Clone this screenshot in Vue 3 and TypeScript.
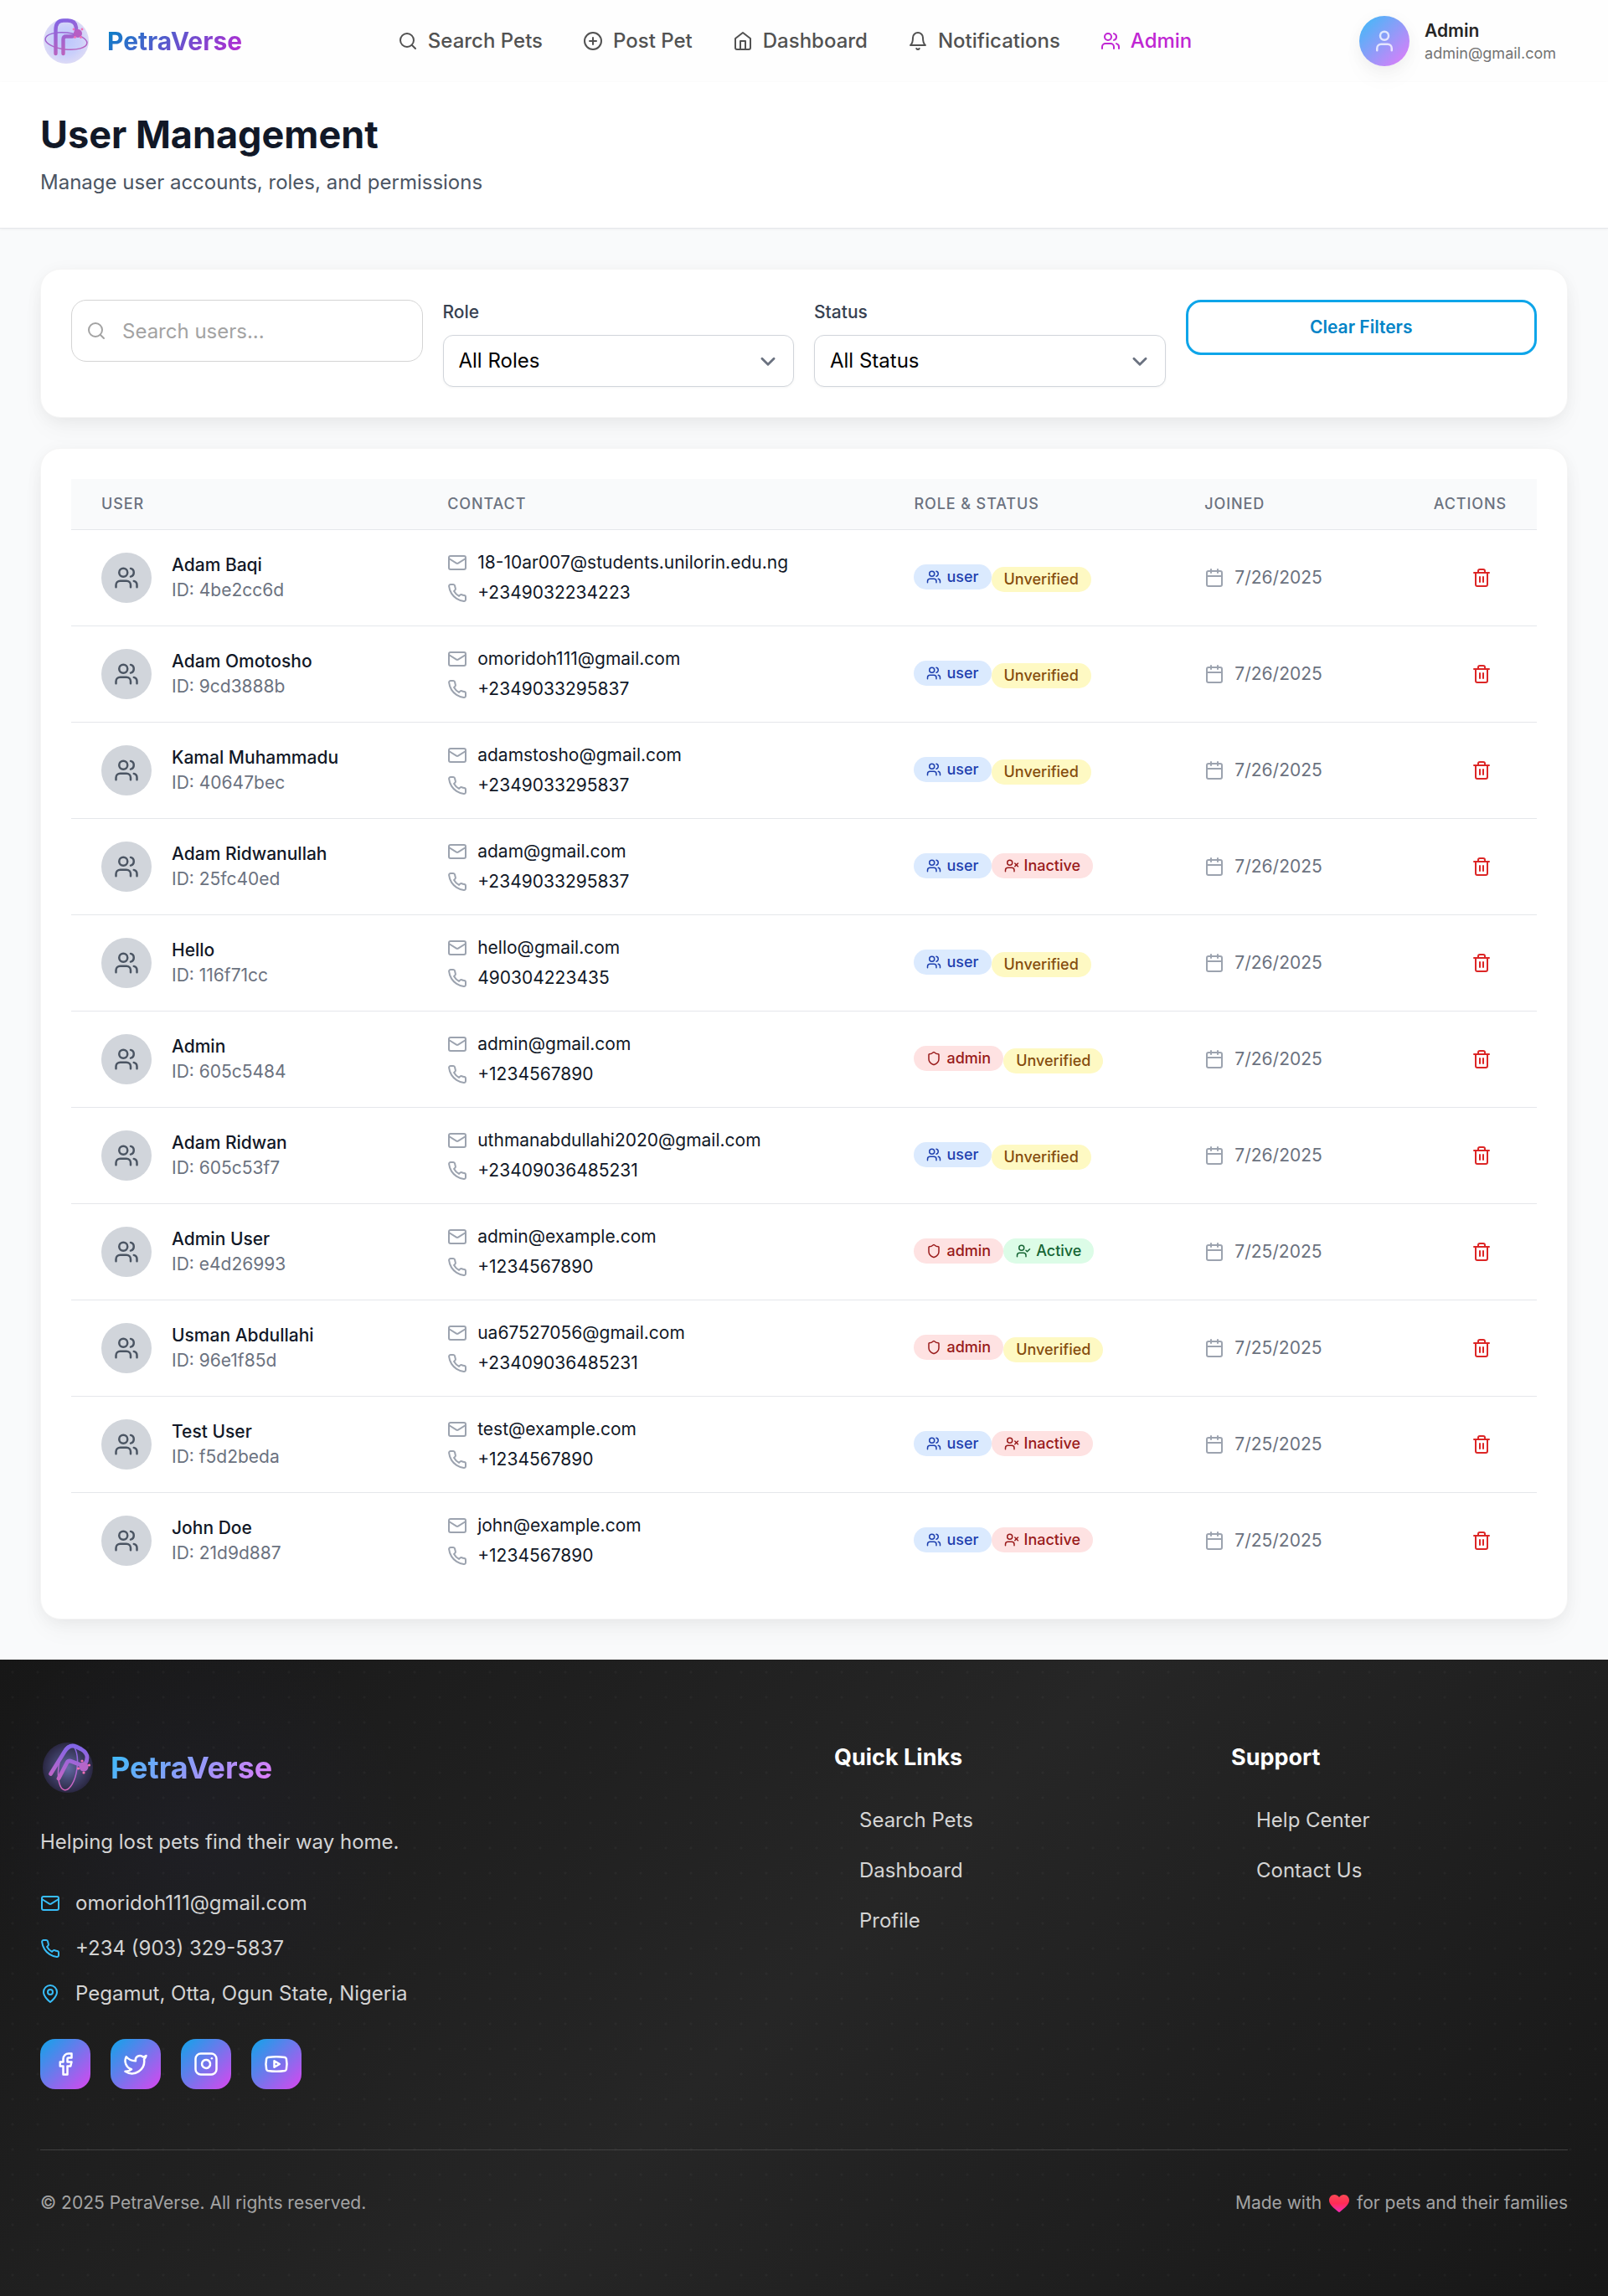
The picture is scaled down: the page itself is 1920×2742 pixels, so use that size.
<script setup lang="ts">
import { computed, h, ref } from 'vue'

const shapes: Record<string, string[]> = {
  search: ['M19 11a8 8 0 1 1-16 0 8 8 0 0 1 16 0', 'm21 21-4.3-4.3'],
  plus: ['M22 12a10 10 0 1 1-20 0 10 10 0 0 1 20 0', 'M8 12h8', 'M12 8v8'],
  home: ['m3 9 9-7 9 7v11a2 2 0 0 1-2 2H5a2 2 0 0 1-2-2z', 'M9 22V12h6v10'],
  bell: ['M6 8a6 6 0 0 1 12 0c0 7 3 9 3 9H3s3-2 3-9', 'M10.3 21a1.94 1.94 0 0 0 3.4 0'],
  users: [
    'M16 21v-2a4 4 0 0 0-4-4H6a4 4 0 0 0-4 4v2',
    'M13 7a4 4 0 1 1-8 0 4 4 0 0 1 8 0',
    'M22 21v-2a4 4 0 0 0-3-3.87',
    'M16 3.13a4 4 0 0 1 0 7.75',
  ],
  user: ['M19 21v-2a4 4 0 0 0-4-4H9a4 4 0 0 0-4 4v2', 'M16 7a4 4 0 1 1-8 0 4 4 0 0 1 8 0'],
  userX: [
    'M16 21v-2a4 4 0 0 0-4-4H6a4 4 0 0 0-4 4v2',
    'M13 7a4 4 0 1 1-8 0 4 4 0 0 1 8 0',
    'm17 8 5 5',
    'm22 8-5 5',
  ],
  userCheck: [
    'M16 21v-2a4 4 0 0 0-4-4H6a4 4 0 0 0-4 4v2',
    'M13 7a4 4 0 1 1-8 0 4 4 0 0 1 8 0',
    'm16 11 2 2 4-4',
  ],
  shield: [
    'M20 13c0 5-3.5 7.5-7.66 8.95a1 1 0 0 1-.67-.01C7.5 20.5 4 18 4 13V6a1 1 0 0 1 1-1c2 0 4.5-1.2 6.24-2.72a1.17 1.17 0 0 1 1.52 0C14.51 3.81 17 5 19 5a1 1 0 0 1 1 1z',
  ],
  mail: [
    'M4 4h16a2 2 0 0 1 2 2v12a2 2 0 0 1-2 2H4a2 2 0 0 1-2-2V6a2 2 0 0 1 2-2z',
    'm22 7-8.97 5.7a1.94 1.94 0 0 1-2.06 0L2 7',
  ],
  phone: [
    'M22 16.92v3a2 2 0 0 1-2.18 2 19.79 19.79 0 0 1-8.63-3.07 19.5 19.5 0 0 1-6-6 19.79 19.79 0 0 1-3.07-8.67A2 2 0 0 1 4.11 2h3a2 2 0 0 1 2 1.72 12.84 12.84 0 0 0 .7 2.81 2 2 0 0 1-.45 2.11L8.09 9.91a16 16 0 0 0 6 6l1.27-1.27a2 2 0 0 1 2.11-.45 12.84 12.84 0 0 0 2.81.7A2 2 0 0 1 22 16.92z',
  ],
  pin: ['M20 10c0 6-8 12-8 12s-8-6-8-12a8 8 0 0 1 16 0z', 'M15 10a3 3 0 1 1-6 0 3 3 0 0 1 6 0'],
  calendar: ['M8 2v4', 'M16 2v4', 'M5 4h14a2 2 0 0 1 2 2v14a2 2 0 0 1-2 2H5a2 2 0 0 1-2-2V6a2 2 0 0 1 2-2z', 'M3 10h18'],
  trash: [
    'M3 6h18',
    'M19 6v14c0 1-1 2-2 2H7c-1 0-2-1-2-2V6',
    'M8 6V4c0-1 1-2 2-2h4c1 0 2 1 2 2v2',
    'M10 11v6',
    'M14 11v6',
  ],
  chevron: ['m7 10 5 5 5-5'],
  facebook: ['M18 2h-3a5 5 0 0 0-5 5v3H7v4h3v8h4v-8h3l1-4h-4V7a1 1 0 0 1 1-1h3z'],
  twitter: [
    'M22 4s-.7 2.1-2 3.4c1.6 10-9.4 17.3-18 11.6 2.2.1 4.4-.6 6-2C3 15.5.5 9.6 3 5c2.2 2.6 5.6 4.1 9 4-.9-4.2 4-6.6 7-3.8 1.1 0 3-1.2 3-1.2z',
  ],
  instagram: [
    'M7 2h10a5 5 0 0 1 5 5v10a5 5 0 0 1-5 5H7a5 5 0 0 1-5-5V7a5 5 0 0 1 5-5z',
    'M16 11.37A4 4 0 1 1 12.63 8 4 4 0 0 1 16 11.37z',
    'M17.5 6.5h.01',
  ],
  youtube: [
    'M2.5 17a24.12 24.12 0 0 1 0-10 2 2 0 0 1 1.4-1.4 49.56 49.56 0 0 1 16.2 0A2 2 0 0 1 21.5 7a24.12 24.12 0 0 1 0 10 2 2 0 0 1-1.4 1.4 49.55 49.55 0 0 1-16.2 0A2 2 0 0 1 2.5 17',
    'm10 15 5-3-5-3z',
  ],
}

const Icon = (props: { name: string }) =>
  h(
    'svg',
    {
      viewBox: '0 0 24 24',
      fill: 'none',
      stroke: 'currentColor',
      'stroke-width': 2,
      'stroke-linecap': 'round',
      'stroke-linejoin': 'round',
      'aria-hidden': 'true',
    },
    shapes[props.name].map((d) => h('path', { d })),
  )
Icon.props = ['name']

const navItems = [
  { icon: 'search', label: 'Search Pets', active: false },
  { icon: 'plus', label: 'Post Pet', active: false },
  { icon: 'home', label: 'Dashboard', active: false },
  { icon: 'bell', label: 'Notifications', active: false },
  { icon: 'users', label: 'Admin', active: true },
]

type Role = 'user' | 'admin'
type Status = 'Unverified' | 'Inactive' | 'Active'
interface Account {
  name: string
  id: string
  email: string
  phone: string
  role: Role
  status: Status
  joined: string
}

const account = (
  name: string,
  id: string,
  email: string,
  phone: string,
  role: Role,
  status: Status,
  joined: string,
): Account => ({ name, id, email, phone, role, status, joined })

const accounts = ref<Account[]>([
  account('Adam Baqi', '4be2cc6d', '18-10ar007@students.unilorin.edu.ng', '+2349032234223', 'user', 'Unverified', '7/26/2025'),
  account('Adam Omotosho', '9cd3888b', 'omoridoh111@gmail.com', '+2349033295837', 'user', 'Unverified', '7/26/2025'),
  account('Kamal Muhammadu', '40647bec', 'adamstosho@gmail.com', '+2349033295837', 'user', 'Unverified', '7/26/2025'),
  account('Adam Ridwanullah', '25fc40ed', 'adam@gmail.com', '+2349033295837', 'user', 'Inactive', '7/26/2025'),
  account('Hello', '116f71cc', 'hello@gmail.com', '490304223435', 'user', 'Unverified', '7/26/2025'),
  account('Admin', '605c5484', 'admin@gmail.com', '+1234567890', 'admin', 'Unverified', '7/26/2025'),
  account('Adam Ridwan', '605c53f7', 'uthmanabdullahi2020@gmail.com', '+23409036485231', 'user', 'Unverified', '7/26/2025'),
  account('Admin User', 'e4d26993', 'admin@example.com', '+1234567890', 'admin', 'Active', '7/25/2025'),
  account('Usman Abdullahi', '96e1f85d', 'ua67527056@gmail.com', '+23409036485231', 'admin', 'Unverified', '7/25/2025'),
  account('Test User', 'f5d2beda', 'test@example.com', '+1234567890', 'user', 'Inactive', '7/25/2025'),
  account('John Doe', '21d9d887', 'john@example.com', '+1234567890', 'user', 'Inactive', '7/25/2025'),
])

const query = ref('')
const role = ref('')
const status = ref('')

const visible = computed(() =>
  accounts.value.filter(
    (a) =>
      (a.name + a.email).toLowerCase().includes(query.value.toLowerCase()) &&
      (!role.value || a.role === role.value) &&
      (!status.value || a.status === status.value),
  ),
)

function clearFilters() {
  query.value = ''
  role.value = ''
  status.value = ''
}

function remove(id: string) {
  accounts.value = accounts.value.filter((a) => a.id !== id)
}

const statusIcon: Record<Status, string> = { Unverified: '', Inactive: 'userX', Active: 'userCheck' }
const socials = ['facebook', 'twitter', 'instagram', 'youtube']
const quickLinks = ['Search Pets', 'Dashboard', 'Profile']
const supportLinks = ['Help Center', 'Contact Us']
</script>

<template>
  <div class="page">
    <nav class="nav">
      <a class="brand" href="#">
        <svg class="brand-mark" viewBox="0 0 60 60" aria-hidden="true">
          <defs>
            <radialGradient id="orbLight">
              <stop offset="0" stop-color="#bcc6fd" />
              <stop offset="0.6" stop-color="#c9cffb" />
              <stop offset="1" stop-color="#dcdaf6" />
            </radialGradient>
            <linearGradient id="inkLight" gradientUnits="userSpaceOnUse" x1="20" y1="4" x2="34" y2="48">
              <stop offset="0" stop-color="#8264e4" />
              <stop offset="1" stop-color="#c063ba" />
            </linearGradient>
          </defs>
          <circle cx="31" cy="30" r="27" fill="url(#orbLight)" />
          <g fill="none" stroke="url(#inkLight)" stroke-linecap="round">
            <ellipse cx="31" cy="30" rx="25" ry="10" stroke-width="1.5" transform="rotate(6 31 30)" />
            <path stroke-width="4.4" d="M18.5 45V17Q18.5 5.5 28 5.5H33Q42 5.5 43 14Q44 24 38 24.5H31Q27.5 24.5 27.5 28V45" />
          </g>
          <circle cx="45" cy="21" r="5" fill="#b65fc4" />
          <g fill="#f472b6">
            <circle cx="40" cy="16" r="1.4" /><circle cx="50" cy="16" r="1.4" />
            <circle cx="41.5" cy="25.5" r="1.4" /><circle cx="48.5" cy="25.5" r="1.4" />
          </g>
        </svg>
        <span class="brand-name">PetraVerse</span>
      </a>
      <div class="nav-links">
        <a v-for="item in navItems" :key="item.label" href="#" class="nav-link" :class="{ active: item.active }">
          <Icon :name="item.icon" class="icon" />{{ item.label }}
        </a>
      </div>
      <button type="button" class="profile">
        <span class="profile-avatar"><Icon name="user" class="icon-lg" /></span>
        <span class="profile-text">
          <span class="profile-name">Admin</span>
          <span class="profile-mail">admin@gmail.com</span>
        </span>
      </button>
    </nav>

    <header class="heading">
      <h1>User Management</h1>
      <p>Manage user accounts, roles, and permissions</p>
    </header>

    <main class="main">
      <form class="card filters" @submit.prevent>
        <div class="search">
          <Icon name="search" class="icon search-icon" />
          <input v-model="query" type="text" placeholder="Search users..." aria-label="Search users" />
        </div>
        <div class="field">
          <label for="role">Role</label>
          <div class="select">
            <select id="role" v-model="role">
              <option value="">All Roles</option>
              <option value="user">User</option>
              <option value="admin">Admin</option>
            </select>
            <Icon name="chevron" class="chevron" />
          </div>
        </div>
        <div class="field">
          <label for="status">Status</label>
          <div class="select">
            <select id="status" v-model="status">
              <option value="">All Status</option>
              <option>Active</option>
              <option>Inactive</option>
              <option>Unverified</option>
            </select>
            <Icon name="chevron" class="chevron" />
          </div>
        </div>
        <button type="button" class="clear" @click="clearFilters">Clear Filters</button>
      </form>

      <section class="card">
        <table class="table">
          <thead>
            <tr>
              <th scope="col">User</th>
              <th scope="col">Contact</th>
              <th scope="col">Role &amp; Status</th>
              <th scope="col">Joined</th>
              <th scope="col" class="right">Actions</th>
            </tr>
          </thead>
          <tbody>
            <tr v-for="a in visible" :key="a.id">
              <td>
                <div class="person">
                  <span class="avatar"><Icon name="users" class="icon-lg" /></span>
                  <div>
                    <div class="person-name">{{ a.name }}</div>
                    <div class="muted">ID: {{ a.id }}</div>
                  </div>
                </div>
              </td>
              <td>
                <div class="contacts">
                  <div class="line"><Icon name="mail" class="icon faint" />{{ a.email }}</div>
                  <div class="line"><Icon name="phone" class="icon faint" />{{ a.phone }}</div>
                </div>
              </td>
              <td>
                <span class="badge" :class="a.role">
                  <Icon :name="a.role === 'admin' ? 'shield' : 'users'" class="icon-sm" />{{ a.role }}
                </span>
                <span class="badge" :class="a.status.toLowerCase()">
                  <Icon v-if="statusIcon[a.status]" :name="statusIcon[a.status]" class="icon-sm" />{{ a.status }}
                </span>
              </td>
              <td>
                <div class="line muted"><Icon name="calendar" class="icon faint" />{{ a.joined }}</div>
              </td>
              <td class="right">
                <button type="button" class="delete" :aria-label="'Delete ' + a.name" @click="remove(a.id)">
                  <Icon name="trash" class="icon" />
                </button>
              </td>
            </tr>
          </tbody>
        </table>
      </section>
    </main>

    <footer class="footer">
      <div class="footer-grid">
        <div class="about">
          <a class="brand" href="#">
            <svg class="brand-mark-lg" viewBox="0 0 66 66" aria-hidden="true">
              <defs>
                <radialGradient id="orbDark">
                  <stop offset="0" stop-color="#656ba6" />
                  <stop offset="0.5" stop-color="#444670" />
                  <stop offset="1" stop-color="#2a2742" />
                </radialGradient>
                <linearGradient id="inkDark" gradientUnits="userSpaceOnUse" x1="36" y1="6" x2="30" y2="60">
                  <stop offset="0" stop-color="#8266e8" />
                  <stop offset="1" stop-color="#d565bb" />
                </linearGradient>
              </defs>
              <circle cx="33" cy="33" r="30" fill="url(#orbDark)" />
              <g fill="none" stroke="url(#inkDark)" stroke-linecap="round" stroke-linejoin="round">
                <ellipse cx="33" cy="33" rx="11" ry="27" stroke-width="1.5" transform="rotate(8 33 33)" />
                <path stroke-width="4.8" d="M12.5 40.5L29 14Q35 4.5 43 8L49 11Q56 15 56 21Q55.5 30 49 30L36 25Q33.5 24.5 32 27L22 46" />
              </g>
              <circle cx="52" cy="32" r="5.5" fill="#b565c9" />
              <g fill="#f472b6">
                <circle cx="50" cy="25" r="1.6" /><circle cx="58.5" cy="30" r="1.6" />
                <circle cx="45.5" cy="34" r="1.6" /><circle cx="52" cy="39" r="1.6" />
              </g>
            </svg>
            <span class="brand-name large">PetraVerse</span>
          </a>
          <p class="tagline">Helping lost pets find their way home.</p>
          <ul class="reach">
            <li><Icon name="mail" class="icon sky" />omoridoh111@gmail.com</li>
            <li><Icon name="phone" class="icon sky" />+234 (903) 329-5837</li>
            <li><Icon name="pin" class="icon sky" />Pegamut, Otta, Ogun State, Nigeria</li>
          </ul>
          <div class="socials">
            <a v-for="s in socials" :key="s" href="#" class="social" :aria-label="s"><Icon :name="s" class="icon-lg" /></a>
          </div>
        </div>
        <div>
          <h3>Quick Links</h3>
          <ul class="links">
            <li v-for="l in quickLinks" :key="l"><a href="#">{{ l }}</a></li>
          </ul>
        </div>
        <div>
          <h3>Support</h3>
          <ul class="links">
            <li v-for="l in supportLinks" :key="l"><a href="#">{{ l }}</a></li>
          </ul>
        </div>
      </div>
      <div class="legal">
        <span>© 2025 PetraVerse. All rights reserved.</span>
        <span class="made">
          Made with
          <svg class="heart" viewBox="0 0 24 21" role="img" aria-label="love">
            <defs>
              <linearGradient id="heartFill" x1="0" y1="0" x2="0" y2="1">
                <stop offset="0" stop-color="#fb4a55" />
                <stop offset="0.5" stop-color="#ff2c55" />
                <stop offset="1" stop-color="#f52cb8" />
              </linearGradient>
            </defs>
            <path fill="url(#heartFill)" d="M12 3C10.5 1 8.5 0 6.5 0 2.8 0 0 2.8 0 6.8 0 11.5 5.5 16 11 20.5Q12 21.3 13 20.5C18.500 16 24 11.500 24 6.800 24 2.800 21.200 0 17.500 0 15.500 0 13.500 1 12 3Z" />
          </svg>
          for pets and their families
        </span>
      </div>
    </footer>
  </div>
</template>

<style>
body {
  margin: 0;
  background: #f9fafb;
}
</style>

<style scoped>
.page {
  font-family: Inter, 'Liberation Sans', sans-serif;
  font-size: 24px;
  line-height: 36px;
  color: #171717;
}
.page *,
.page *::before {
  box-sizing: border-box;
}
a {
  color: inherit;
  text-decoration: none;
}
button,
input,
select {
  font: inherit;
}
button {
  cursor: pointer;
}
h1,
h3,
p,
ul {
  margin: 0;
  padding: 0;
}
ul {
  list-style: none;
}
.icon {
  width: 24px;
  height: 24px;
  flex: none;
}
.icon-sm {
  width: 18px;
  height: 18px;
  flex: none;
}
.icon-lg {
  width: 30px;
  height: 30px;
  flex: none;
}

.nav {
  display: flex;
  align-items: center;
  justify-content: space-between;
  min-height: 98px;
  padding: 0 48px;
  background: #fefefe;
}
.brand {
  display: flex;
  align-items: center;
  gap: 18px;
}
.nav .brand {
  gap: 20px;
}
.brand-mark {
  width: 60px;
  height: 60px;
}
.brand-mark-lg {
  width: 66px;
  height: 66px;
}
.brand-name {
  font-size: 30px;
  line-height: 42px;
  font-weight: 700;
  color: transparent;
  background: linear-gradient(135deg, #0284c7, #c026d3);
  -webkit-background-clip: text;
  background-clip: text;
}
.brand-name.large {
  font-size: 36px;
  line-height: 48px;
  background-image: linear-gradient(135deg, #38bdf8, #e879f9);
}
.nav-links {
  display: flex;
  gap: 48px;
}
.nav-link {
  display: flex;
  align-items: center;
  gap: 12px;
  font-weight: 500;
  color: #525252;
}
.nav-link.active {
  color: #c026d3;
}
.profile {
  display: flex;
  align-items: center;
  gap: 18px;
  padding: 0 14px;
  border: 0;
  background: none;
  text-align: left;
}
.profile-avatar {
  display: flex;
  align-items: center;
  justify-content: center;
  width: 60px;
  height: 60px;
  border-radius: 50%;
  color: rgba(255, 255, 255, 0.75);
  background: linear-gradient(135deg, #38bdf8, #e879f9);
  box-shadow: 0 3px 22px -4px rgba(0, 0, 0, 0.07), 0 15px 30px -3px rgba(0, 0, 0, 0.04);
}
.profile-text {
  display: flex;
  flex-direction: column;
}
.profile-name {
  font-size: 21px;
  line-height: 30px;
  font-weight: 600;
  color: #262626;
}
.profile-mail {
  font-size: 18px;
  line-height: 24px;
  color: #737373;
}

.heading {
  padding: 36px 48px;
  background: #fff;
  border-bottom: 1px solid #e5e7eb;
  box-shadow: 0 1px 3px rgba(0, 0, 0, 0.05);
}
.heading h1 {
  font-size: 45px;
  line-height: 54px;
  font-weight: 700;
  color: #111827;
}
.heading p {
  margin-top: 12px;
  color: #4b5563;
}

.main {
  display: flex;
  flex-direction: column;
  gap: 36px;
  padding: 48px;
}
.card {
  padding: 36px;
  background: #fff;
  border: 1px solid #f5f5f5;
  border-radius: 24px;
  box-shadow: 0 3px 22px -4px rgba(0, 0, 0, 0.07), 0 15px 30px -3px rgba(0, 0, 0, 0.04);
}
.filters {
  display: grid;
  grid-template-columns: repeat(4, minmax(0, 1fr));
  gap: 24px;
  align-items: start;
}
.search,
.select {
  position: relative;
}
.search-icon {
  position: absolute;
  top: 25px;
  left: 18px;
  color: #a3a3a3;
}
.search input {
  display: block;
  width: 100%;
  height: 74px;
  padding: 18px 18px 18px 60px;
  border: 1px solid #d4d4d4;
  border-radius: 18px;
  background: #fff;
  color: #171717;
}
.search input::placeholder {
  color: #a3a3a3;
}
.field label {
  display: block;
  margin-bottom: 12px;
  font-size: 21px;
  line-height: 30px;
  font-weight: 500;
  color: #374151;
}
.select select {
  display: block;
  width: 100%;
  height: 62px;
  padding: 12px 60px 12px 18px;
  appearance: none;
  border: 1px solid #d1d5db;
  border-radius: 12px;
  background: #fff;
  color: #000;
  box-shadow: 0 1px 3px rgba(0, 0, 0, 0.05);
}
.chevron {
  position: absolute;
  top: 14px;
  right: 14px;
  width: 34px;
  height: 34px;
  color: #6b7280;
  pointer-events: none;
}
.clear {
  padding: 15px 24px;
  border: 3px solid #0ea5e9;
  border-radius: 18px;
  background: none;
  font-size: 21px;
  line-height: 30px;
  font-weight: 600;
  color: #0284c7;
}

.table {
  width: 100%;
  border-collapse: separate;
  border-spacing: 0;
}
th {
  padding: 18px 36px;
  background: #f9fafb;
  border-bottom: 1px solid #e5e7eb;
  font-size: 18px;
  line-height: 24px;
  font-weight: 500;
  letter-spacing: 0.05em;
  text-align: left;
  text-transform: uppercase;
  color: #6b7280;
}
td {
  padding: 24px 36px;
  border-bottom: 1px solid #e5e7eb;
  vertical-align: middle;
  white-space: nowrap;
}
tbody tr:last-child td {
  border-bottom: 0;
}
th.right,
td.right {
  text-align: right;
}
.person {
  display: flex;
  align-items: center;
  gap: 24px;
  font-size: 21px;
  line-height: 30px;
}
.avatar {
  display: flex;
  align-items: center;
  justify-content: center;
  flex: none;
  width: 60px;
  height: 60px;
  border-radius: 50%;
  background: #d1d5db;
  color: #4b5563;
}
.person-name {
  font-weight: 500;
  color: #111827;
}
.contacts {
  display: grid;
  gap: 6px;
}
.line {
  display: flex;
  align-items: center;
  gap: 12px;
  font-size: 21px;
  line-height: 30px;
  color: #111827;
}
.muted {
  color: #6b7280;
}
.faint {
  color: #9ca3af;
}
.badge {
  display: inline-flex;
  align-items: center;
  gap: 6px;
  padding: 3px 15px;
  border-radius: 15px;
  font-size: 18px;
  line-height: 24px;
  font-weight: 500;
}
.badge.user {
  background: #dbeafe;
  color: #1e40af;
}
.badge.admin,
.badge.inactive {
  background: #fee2e2;
  color: #991b1b;
}
.badge.unverified {
  background: #fef9c3;
  color: #854d0e;
}
.badge.active {
  background: #dcfce7;
  color: #166534;
}
.delete {
  display: inline-flex;
  padding: 12px 18px;
  border: 0;
  background: none;
  color: #dc2626;
  vertical-align: middle;
}

.footer {
  padding: 96px 48px;
  color: #d4d4d4;
  background:
    radial-gradient(circle at 15px 15px, rgba(255, 255, 255, 0.03) 1px, transparent 2px) 0 0 / 30px 30px,
    radial-gradient(circle at 230px 200px, rgba(99, 102, 241, 0.04), transparent 260px),
    linear-gradient(135deg, #171717, #262626 50%, #171717);
}
.footer-grid {
  display: grid;
  grid-template-columns: repeat(4, minmax(0, 1fr));
  gap: 72px;
}
.about {
  grid-column: span 2;
  display: flex;
  flex-direction: column;
  gap: 36px;
}
.tagline {
  line-height: 39px;
}
.reach {
  display: grid;
  gap: 18px;
}
.reach li {
  display: flex;
  align-items: center;
  gap: 18px;
}
.sky {
  color: #38bdf8;
}
.socials {
  display: flex;
  gap: 24px;
}
.social {
  display: flex;
  align-items: center;
  justify-content: center;
  width: 60px;
  height: 60px;
  border-radius: 18px;
  color: #fff;
  background: linear-gradient(135deg, #0ea5e9, #d946ef);
}
.footer h3 {
  font-size: 27px;
  line-height: 42px;
  font-weight: 700;
  color: #fff;
}
.links {
  display: grid;
  gap: 24px;
  margin-top: 36px;
  padding-left: 30px;
}
.legal {
  display: flex;
  justify-content: space-between;
  margin-top: 72px;
  padding-top: 48px;
  border-top: 1px solid #404040;
  font-size: 21px;
  line-height: 30px;
  color: #a3a3a3;
}
.heart {
  width: 24px;
  height: 21px;
  margin: 0 3px;
  vertical-align: -4px;
}
</style>
